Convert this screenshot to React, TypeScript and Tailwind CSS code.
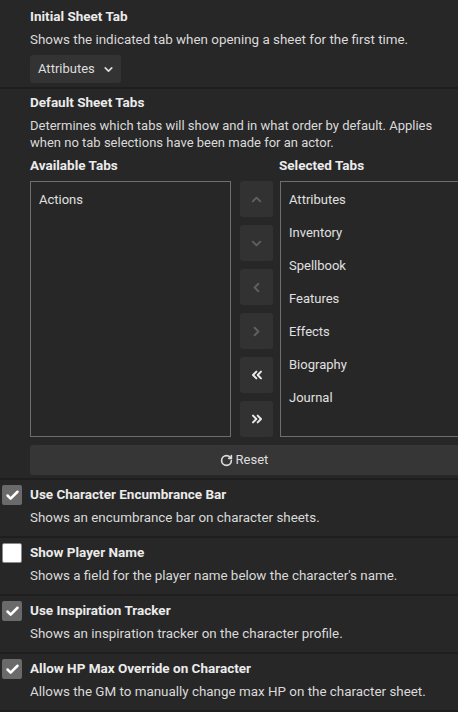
import { ChevronDown, ChevronUp, ChevronLeft, ChevronRight, ChevronsLeft, ChevronsRight, RotateCw, Check } from "lucide-react";

const SELECTED = ["Attributes", "Inventory", "Spellbook", "Features", "Effects", "Biography", "Journal"];

const MOVE_BUTTONS = [
  { icon: ChevronUp, active: false },
  { icon: ChevronDown, active: false },
  { icon: ChevronLeft, active: false },
  { icon: ChevronRight, active: false },
  { icon: ChevronsLeft, active: true },
  { icon: ChevronsRight, active: true },
];

const TOGGLES = [
  { label: "Use Character Encumbrance Bar", hint: "Shows an encumbrance bar on character sheets.", checked: true },
  { label: "Show Player Name", hint: "Shows a field for the player name below the character's name.", checked: false },
  { label: "Use Inspiration Tracker", hint: "Shows an inspiration tracker on the character profile.", checked: true },
  { label: "Allow HP Max Override on Character", hint: "Allows the GM to manually change max HP on the character sheet.", checked: true },
];

const font = "font-['Roboto','Noto_Sans',sans-serif]";

export default function App() {
  return (
    <div className={`h-[712px] w-[458px] overflow-hidden bg-[#1e1e1e] text-[13px] text-[#dadada] ${font}`}>
      {/* Initial sheet tab */}
      <section className="h-[87px] bg-[#272727] pl-[30px] pt-[6px]">
        <h3 className="text-[13.5px] font-bold leading-[20px] text-[#ebebeb]">Initial Sheet Tab</h3>
        <p className="mt-[5px] text-[13.4px] leading-[18px]">Shows the indicated tab when opening a sheet for the first time.</p>
        <button
          type="button"
          className="mt-[6px] inline-flex h-[28px] items-center gap-[7px] rounded-[3px] bg-[#333333] pl-[8px] pr-[6px] text-[#dedede]"
        >
          Attributes
          <ChevronDown className="h-[13px] w-[13px]" strokeWidth={3} />
        </button>
      </section>

      {/* Default sheet tabs */}
      <section className="mt-[2px] h-[389px] bg-[#272727] pl-[30px] pt-[3px]">
        <h3 className="text-[13.5px] font-bold leading-[20px] text-[#ebebeb]">Default Sheet Tabs</h3>
        <p className="mt-[5px] pr-[8px] leading-[17px]">
          Determines which tabs will show and in what order by default. Applies when no tab selections have been made for an actor.
        </p>
        <div className="mt-[5px] flex">
          <span className="w-[249px] text-[13.5px] font-bold leading-[18px] text-[#ebebeb]">Available Tabs</span>
          <span className="text-[13.5px] font-bold leading-[18px] text-[#ebebeb]">Selected Tabs</span>
        </div>
        <div className="mt-[7px] flex">
          <div className="h-[256px] w-[201px] border border-[#6e6e6e] px-[8px] pt-[9px]">
            <div className="leading-[18px] text-[#e0e0e0]">Actions</div>
          </div>
          <div className="ml-[9px] flex w-[33px] flex-col gap-[8px]">
            {MOVE_BUTTONS.map(({ icon: Icon, active }, i) => (
              <button
                key={i}
                type="button"
                className="flex h-[36px] items-center justify-center rounded-[3px] bg-[#323232]"
              >
                <Icon
                  className={active ? "h-[16px] w-[16px] text-[#ebebeb]" : "h-[15px] w-[15px] text-[#606060]"}
                  strokeWidth={3}
                />
              </button>
            ))}
          </div>
          <div className="ml-[7px] h-[256px] flex-1 border border-r-0 border-[#6e6e6e] pl-[8px] pt-[9px]">
            {SELECTED.map((t) => (
              <div key={t} className="h-[33px] leading-[18px] text-[#e0e0e0]">
                {t}
              </div>
            ))}
          </div>
        </div>
        <button
          type="button"
          className="mt-[8px] flex h-[30px] w-full items-center justify-center gap-[3px] rounded-l-[3px] bg-[#363636] text-[#dedede]"
        >
          <RotateCw className="h-[13px] w-[13px]" strokeWidth={3} />
          Reset
        </button>
      </section>

      {/* Toggle settings */}
      {TOGGLES.map((t) => (
        <section key={t.label} className="mt-[2px] flex h-[56px] bg-[#272727] pt-[4px]">
          <div className="w-[30px] shrink-0 pl-[2px] pt-[1px]">
            {t.checked ? (
              <span className="flex h-[20px] w-[20px] items-center justify-center rounded-[2px] bg-[#6a6a6a]">
                <Check className="h-[15px] w-[15px] text-white" strokeWidth={4} />
              </span>
            ) : (
              <span className="block h-[20px] w-[20px] rounded-[2px] border border-[#8a8a8a] bg-white" />
            )}
          </div>
          <div>
            <h3 className="text-[13.5px] font-bold leading-[20px] text-[#ebebeb]">{t.label}</h3>
            <p className="mt-[5px] text-[13.4px] leading-[18px]">{t.hint}</p>
          </div>
        </section>
      ))}
    </div>
  );
}
